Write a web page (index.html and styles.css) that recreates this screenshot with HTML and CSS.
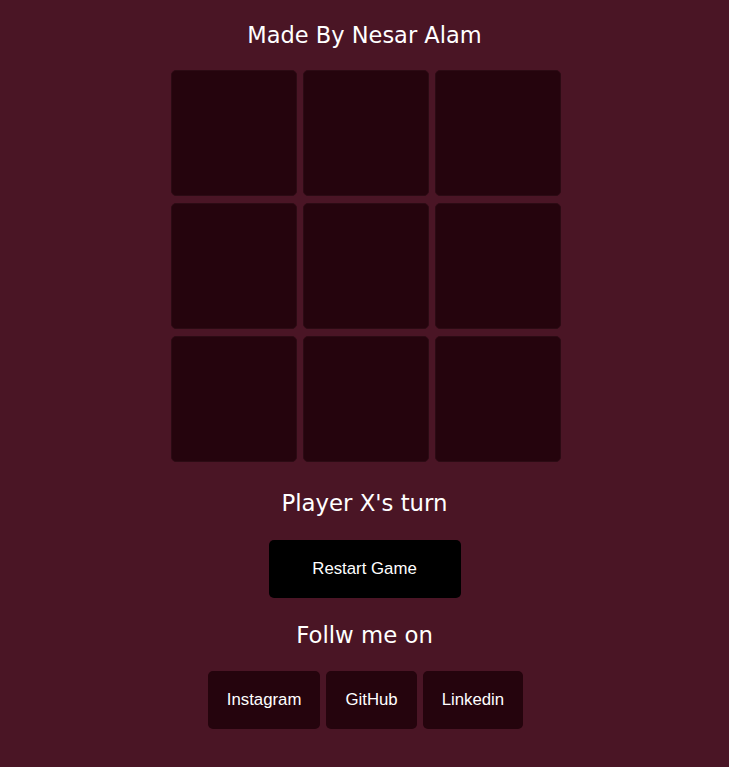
FILE: index.html
```html
<!DOCTYPE html>
<html>
<head>
<meta charset="utf-8">
<link rel="stylesheet" href="styles.css">
</head>
<body>
<main class="page">
  <h1 class="title">Made By Nesar Alam</h1>
  <div class="board">
    <div class="cell"></div><div class="cell"></div><div class="cell"></div>
    <div class="cell"></div><div class="cell"></div><div class="cell"></div>
    <div class="cell"></div><div class="cell"></div><div class="cell"></div>
  </div>
  <h2 class="status">Player X's turn</h2>
  <button class="restart">Restart Game</button>
  <h2 class="follow">Follw me on</h2>
  <div class="socials">
    <a class="social">Instagram</a>
    <a class="social">GitHub</a>
    <a class="social">Linkedin</a>
  </div>
</main>
</body>
</html>
```
FILE: styles.css
```css
html, body {
  margin: 0;
  padding: 0;
  background: #4a1525;
  height: 100%;
}
.page {
  display: flex;
  flex-direction: column;
  align-items: center;
  font-family: "DejaVu Sans", Verdana, sans-serif;
  color: #fff;
}
.title {
  margin: 21px 0 0;
  font-size: 22.5px;
  font-weight: normal;
  line-height: 28px;
}
.board {
  margin-top: 21px;
  margin-left: 2px;
  display: grid;
  grid-template-columns: repeat(3, 126px);
  grid-auto-rows: 126px;
  column-gap: 6px;
  row-gap: 7px;
}
.cell {
  background: #25040d;
  border: 1px solid #2c0b14;
  border-radius: 5px;
}
.status {
  margin: 26px 0 0;
  font-size: 22.8px;
  font-weight: normal;
  line-height: 30px;
}
.restart {
  margin-top: 22px;
  width: 192px;
  height: 58px;
  background: #000;
  color: #fff;
  border: none;
  border-radius: 5px;
  font-family: "Liberation Sans", Arial, sans-serif;
  font-size: 16.8px;
}
.follow {
  margin: 21px 0 0;
  font-size: 22.8px;
  font-weight: normal;
  line-height: 32px;
}
.socials {
  margin-top: 20px;
  margin-left: 2px;
  display: flex;
  gap: 6px;
}
.social {
  background: #25040d;
  color: #fff;
  border-radius: 5px;
  padding: 0 19px;
  height: 58px;
  display: flex;
  align-items: center;
  font-family: "Liberation Sans", Arial, sans-serif;
  font-size: 16.8px;
}
```
